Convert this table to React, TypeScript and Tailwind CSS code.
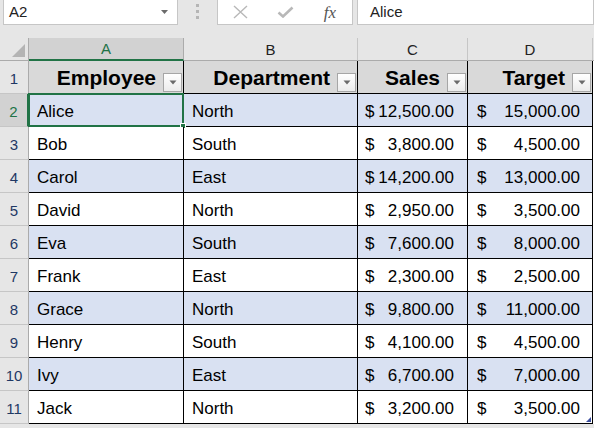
import React from 'react';

const rows = [
  ['Alice', 'North', '12,500.00', '15,000.00'],
  ['Bob', 'South', '3,800.00', '4,500.00'],
  ['Carol', 'East', '14,200.00', '13,000.00'],
  ['David', 'North', '2,950.00', '3,500.00'],
  ['Eva', 'South', '7,600.00', '8,000.00'],
  ['Frank', 'East', '2,300.00', '2,500.00'],
  ['Grace', 'North', '9,800.00', '11,000.00'],
  ['Henry', 'South', '4,100.00', '4,500.00'],
  ['Ivy', 'East', '6,700.00', '7,000.00'],
  ['Jack', 'North', '3,200.00', '3,500.00'],
];

const FilterButton: React.FC = () => (
  <div className="self-end mb-[1px] w-[19px] h-[19px] shrink-0 border border-[#a6a6a6] bg-gradient-to-b from-white to-[#ececec] flex items-center justify-center">
    <svg width="8" height="5" viewBox="0 0 8 5">
      <path d="M0.5 0.5 L7.5 0.5 L4 4.5 Z" fill="#6b6b6b" />
    </svg>
  </div>
);

const HeaderCell: React.FC<{ label: string }> = ({ label }) => (
  <div className="h-[33px] bg-[#d9d9d9] border-r border-b border-black flex items-center justify-end pr-[1px]">
    <span className="text-[21px] font-bold text-black mr-[7px] pt-[1px]">{label}</span>
    <FilterButton />
  </div>
);

const App: React.FC = () => {
  return (
    <div
      className="w-[594px] h-[428px] overflow-hidden bg-[#e6e6e6] text-black"
      style={{ fontFamily: '"Liberation Sans", Arial, sans-serif' }}
    >
      {/* formula bar */}
      <div className="flex h-[26px] items-start">
        <div className="ml-[3px] w-[175px] h-[26px] -mt-[1px] bg-white border border-[#c6c6c6] flex items-center justify-between pl-[5px] pr-[9px]">
          <span className="text-[15px] text-[#222] pt-[1px]">A2</span>
          <svg width="7" height="4" viewBox="0 0 7 4">
            <path d="M0 0 L7 0 L3.5 4 Z" fill="#6b6b6b" />
          </svg>
        </div>
        <div className="w-[39px] h-[25px] flex flex-col items-center justify-center gap-[3px] pb-[2px]">
          <div className="w-[3px] h-[3px] bg-[#b5b5b5]" />
          <div className="w-[3px] h-[3px] bg-[#b5b5b5]" />
          <div className="w-[3px] h-[3px] bg-[#b5b5b5]" />
        </div>
        <div className="w-[136px] h-[26px] -mt-[1px] bg-white border border-[#c6c6c6] flex items-center">
          <div className="w-[44px] flex justify-center">
            <svg width="15" height="14" viewBox="0 0 15 14">
              <path d="M1 1 L14 13 M14 1 L1 13" stroke="#b8b8b8" strokeWidth="1.4" />
            </svg>
          </div>
          <div className="w-[46px] flex justify-center">
            <svg width="17" height="12" viewBox="0 0 17 12">
              <path d="M1.5 6.5 L6 10.5 L15.5 1.5" stroke="#b8b8b8" strokeWidth="2.6" fill="none" />
            </svg>
          </div>
          <div className="w-[44px] flex justify-center">
            <span
              className="italic text-[17px] text-[#555] leading-none"
              style={{ fontFamily: '"Liberation Serif", "Times New Roman", serif' }}
            >
              fx
            </span>
          </div>
        </div>
        <div className="ml-[4px] flex-1 h-[26px] -mt-[1px] bg-white border border-[#c6c6c6] flex items-center pl-[12px]">
          <span className="text-[15px] text-[#222] pt-[1px]">Alice</span>
        </div>
      </div>

      {/* sheet */}
      <div className="mt-[12px] grid grid-cols-[29px_155px_174px_110px_125px_1fr]">
        {/* column letters */}
        <div className="h-[23px] border-r border-b border-[#ababab] flex items-end justify-end p-[3px]">
          <svg width="13" height="13" viewBox="0 0 13 13">
            <path d="M13 0 L13 13 L0 13 Z" fill="#b4b4b4" />
          </svg>
        </div>
        <div className="h-[23px] bg-[#d2d2d2] border-r border-[#ababab] border-b-2 border-b-[#217346] flex items-center justify-center text-[15px] text-[#217346] pt-[2px]">
          A
        </div>
        {['B', 'C', 'D'].map((c) => (
          <div
            key={c}
            className="h-[23px] border-r border-b border-[#c6c6c6] border-b-[#ababab] flex items-center justify-center text-[15px] text-[#222] pt-[2px]"
          >
            {c}
          </div>
        ))}
        <div className="h-[23px] border-b border-[#ababab]" />

        {/* row 1 */}
        <div className="h-[33px] border-r border-b border-[#ababab] border-b-[#c6c6c6] flex items-center justify-center text-[15px] text-[#1f3864] pt-[4px]">
          1
        </div>
        <HeaderCell label="Employee" />
        <HeaderCell label="Department" />
        <HeaderCell label="Sales" />
        <HeaderCell label="Target" />
        <div className="h-[33px] bg-white" />

        {rows.map((r, i) => {
          const n = i + 2;
          const band = n % 2 === 0 ? 'bg-[#d9e1f2]' : 'bg-white';
          const selected = n === 2;
          return (
            <React.Fragment key={n}>
              <div
                className={
                  selected
                    ? 'h-[33px] bg-[#d2d2d2] border-r-2 border-[#217346] border-b border-b-[#c6c6c6] flex items-center justify-center text-[15px] text-[#217346] pt-[4px]'
                    : 'h-[33px] border-r border-[#ababab] border-b border-b-[#c6c6c6] flex items-center justify-center text-[15px] text-[#1f3864] pt-[4px]'
                }
              >
                {n}
              </div>
              <div className={`relative h-[33px] ${band} border-r border-b border-black flex items-center pl-[8px] text-[17px]`}>
                <span className="pt-[3px]">{r[0]}</span>
                {selected && (
                  <div className="absolute -left-[1px] -top-[1px] -right-[1px] -bottom-[1px] border-2 border-[#217346]">
                    <div className="absolute -right-[4px] -bottom-[4px] w-[6px] h-[6px] bg-[#217346] border border-white" />
                  </div>
                )}
              </div>
              <div className={`h-[33px] ${band} border-r border-b border-black flex items-center pl-[8px] text-[17px]`}>
                <span className="pt-[3px]">{r[1]}</span>
              </div>
              <div className={`h-[33px] ${band} border-r border-b border-black flex items-center justify-between pl-[7px] pr-[13px] text-[17px]`}>
                <span className="pt-[3px]">$</span>
                <span className="pt-[3px]">{r[2]}</span>
              </div>
              <div className={`relative h-[33px] ${band} border-r border-b border-black flex items-center justify-between pl-[9px] pr-[12px] text-[17px]`}>
                <span className="pt-[3px]">$</span>
                <span className="pt-[3px]">{r[3]}</span>
                {n === 11 && (
                  <svg className="absolute right-[1px] bottom-[1px]" width="5" height="5" viewBox="0 0 5 5">
                    <path d="M5 0 L5 5 L0 5 Z" fill="#3c4fa0" />
                  </svg>
                )}
              </div>
              <div className="h-[33px] bg-white" />
            </React.Fragment>
          );
        })}
      </div>
    </div>
  );
};

export default App;
